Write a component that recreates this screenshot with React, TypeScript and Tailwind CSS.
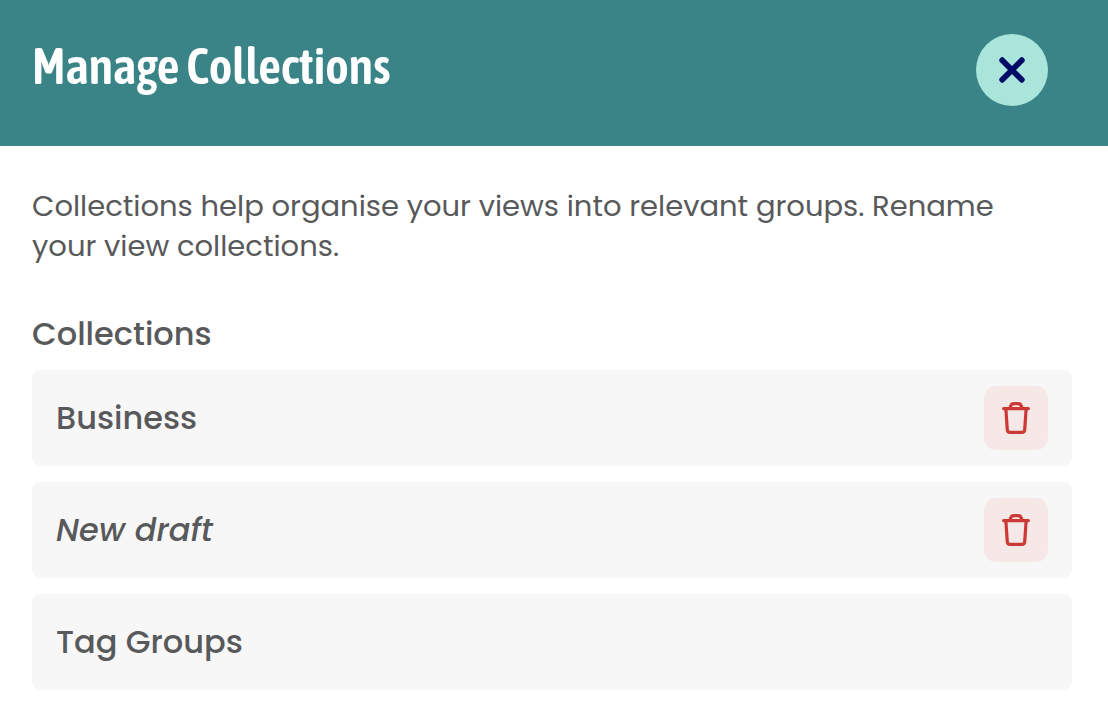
import React, { useState } from 'react';

interface Collection {
  id: string;
  name: string;
  isDraft?: boolean;
  canDelete: boolean;
}

const initialCollections: Collection[] = [
  { id: 'business', name: 'Business', canDelete: true },
  { id: 'new-draft', name: 'New draft', isDraft: true, canDelete: true },
  { id: 'tag-groups', name: 'Tag Groups', canDelete: false },
];

const CloseIcon: React.FC = () => (
  <svg width="26" height="26" viewBox="0 0 26 26" fill="none" stroke="currentColor" strokeWidth="5.8" strokeLinecap="round" aria-hidden="true">
    <path d="M3.200 3.200l19.600 19.600M22.800 3.200L3.200 22.800" />
  </svg>
);

const TrashIcon: React.FC = () => (
  <svg width="28" height="32" viewBox="0 0 28 32" fill="none" stroke="currentColor" strokeWidth="3.2" strokeLinecap="round" strokeLinejoin="round" aria-hidden="true">
    <path d="M1.600 6.600h24.800" />
    <path d="M8 6c.5-2.600 1.800-4.400 3.800-4.400h4.400c2 0 3.300 1.800 3.800 4.400" />
    <path d="M3.900 7l1.400 20.800a2.800 2.800 0 0 0 2.800 2.600h11.800a2.800 2.800 0 0 0 2.800-2.600L24.100 7" />
  </svg>
);

const App: React.FC = () => {
  const [isOpen, setIsOpen] = useState(true);
  const [collections, setCollections] = useState(initialCollections);

  const handleDelete = (id: string) => {
    setCollections((prev) => prev.filter((c) => c.id !== id));
  };

  if (!isOpen) return null;

  return (
    <div className="min-h-screen bg-white font-['Poppins','Inter',sans-serif] text-[#58595b]">
      {/* Header */}
      <header className="flex items-start justify-between bg-[#3a8387] pt-[34px] pr-[60px] pb-10 pl-8">
        <h1 className="font-['Asap_Condensed','Liberation_Sans_Narrow',sans-serif] text-[50px] leading-16 font-semibold text-white">
          Manage Collections
        </h1>
        <button
          type="button"
          aria-label="Close"
          onClick={() => setIsOpen(false)}
          className="flex size-18 shrink-0 items-center justify-center rounded-full bg-[#a9e5da] text-[#040b66]"
        >
          <CloseIcon />
        </button>
      </header>

      <main className="pt-10 pr-9 pb-8 pl-8">
        <p className="max-w-5xl text-[29px] leading-10">
          Collections help organise your views into relevant groups. Rename your view collections.
        </p>

        <h2 className="mt-12 text-[32px] leading-10 font-medium">Collections</h2>

        {/* Collection rows */}
        <ul className="mt-4 flex flex-col gap-4">
          {collections.map((collection) => (
            <li key={collection.id} className="flex h-24 items-center justify-between rounded-lg bg-[#f7f7f7] px-6">
              <span className={`text-[32px] leading-10 font-medium ${collection.isDraft ? 'italic' : ''}`}>
                {collection.name}
              </span>
              {collection.canDelete && (
                <button
                  type="button"
                  aria-label={`Delete ${collection.name}`}
                  onClick={() => handleDelete(collection.id)}
                  className="flex size-16 shrink-0 items-center justify-center rounded-xl bg-[#f7e8e8] text-[#cb3a36]"
                >
                  <TrashIcon />
                </button>
              )}
            </li>
          ))}
        </ul>
      </main>
    </div>
  );
};

export default App;
